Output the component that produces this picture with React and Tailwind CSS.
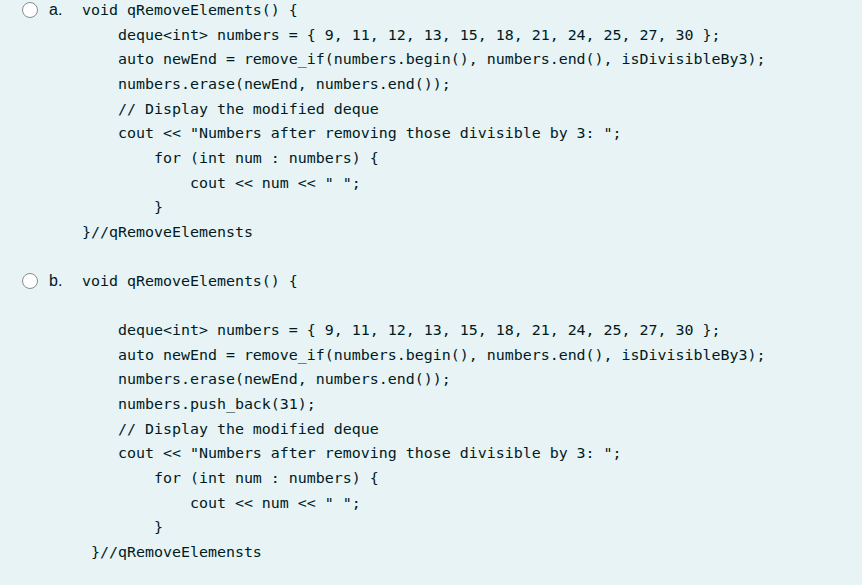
const optionA = [
  "void qRemoveElements() {",
  "    deque<int> numbers = { 9, 11, 12, 13, 15, 18, 21, 24, 25, 27, 30 };",
  "    auto newEnd = remove_if(numbers.begin(), numbers.end(), isDivisibleBy3);",
  "    numbers.erase(newEnd, numbers.end());",
  "    // Display the modified deque",
  '    cout << "Numbers after removing those divisible by 3: ";',
  "        for (int num : numbers) {",
  '            cout << num << " ";',
  "        }",
  "}//qRemoveElemensts",
];

const optionB = [
  "void qRemoveElements() {",
  " ",
  "    deque<int> numbers = { 9, 11, 12, 13, 15, 18, 21, 24, 25, 27, 30 };",
  "    auto newEnd = remove_if(numbers.begin(), numbers.end(), isDivisibleBy3);",
  "    numbers.erase(newEnd, numbers.end());",
  "    numbers.push_back(31);",
  "    // Display the modified deque",
  '    cout << "Numbers after removing those divisible by 3: ";',
  "        for (int num : numbers) {",
  '            cout << num << " ";',
  "        }",
  " }//qRemoveElemensts",
];

function Option({ letter, lines, className }) {
  return (
    <div className={"flex items-start " + (className || "")}>
      <div className="flex h-[24.67px] w-[82px] shrink-0 items-center pl-[22px]">
        <span className="h-4 w-4 rounded-full border border-[#8a8a8a] bg-white" />
        <span className="ml-[11px] font-['Liberation_Sans',Arial,sans-serif] text-[16px] text-[#001a1e]">
          {letter}.
        </span>
      </div>
      <pre className="m-0 font-['DejaVu_Sans_Mono',monospace] text-[14.95px] leading-[24.67px] text-[#001a1e]">
        {lines.join("\n")}
      </pre>
    </div>
  );
}

export default function App() {
  return (
    <div className="h-[585px] w-[862px] overflow-hidden bg-[#e7f3f5]">
      <Option letter="a" lines={optionA} className="-mt-[2px]" />
      <Option letter="b" lines={optionB} className="mt-[24px]" />
    </div>
  );
}
